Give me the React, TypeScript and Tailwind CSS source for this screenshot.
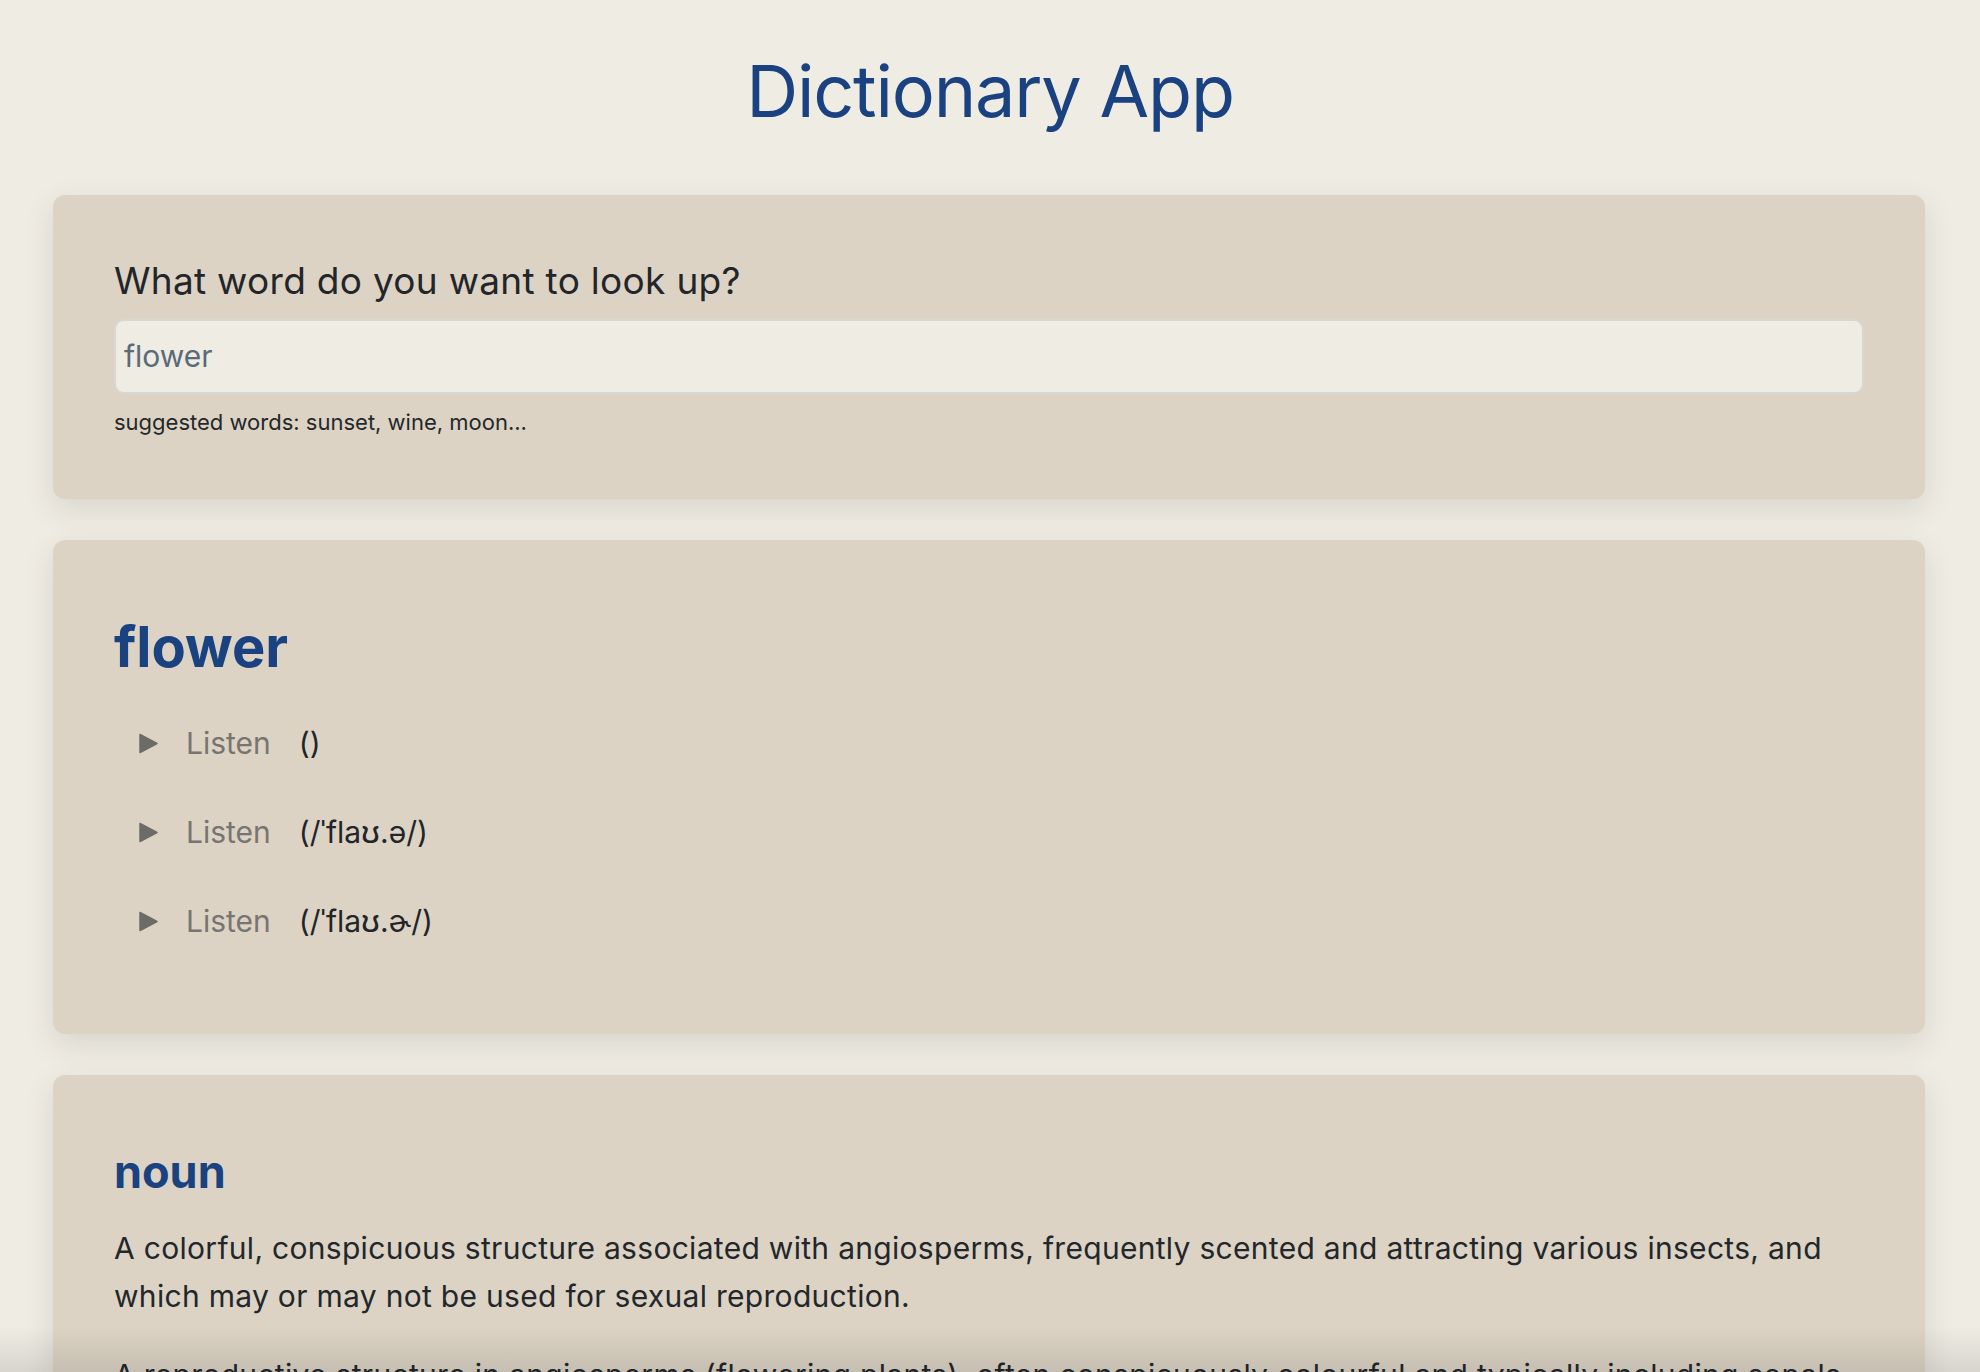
import React from 'react';

const pronunciations = ['()', '(/ˈflaʊ.ə/)', '(/ˈflaʊ.ɚ/)'];

const definitions = [
  'A colorful, conspicuous structure associated with angiosperms, frequently scented and attracting various insects, and which may or may not be used for sexual reproduction.',
  'A reproductive structure in angiosperms (flowering plants), often conspicuously colourful and typically including sepals, petals, and either or both stamens and/or a pistil.',
  'A plant that bears flowers, especially a small plant grown chiefly for its blossoms.',
];

const PlayTriangle: React.FC = () => (
  <svg width="21" height="21" viewBox="0 0 21 21" className="shrink-0">
    <path d="M2 1.5 L19 10.5 L2 19.5 Z" fill="#6d6b68" stroke="#6d6b68" strokeWidth="1.5" strokeLinejoin="round" />
  </svg>
);

export default function App() {
  return (
    <div className="relative h-screen overflow-hidden bg-[#efece4] font-['Inter',sans-serif] text-[#232629]">
      <h1 className="pt-[47px] pb-[60px] text-center text-[72px] leading-[88px] font-normal tracking-[-1.2px] text-[#1a4280]">
        Dictionary App
      </h1>

      <div className="flex flex-col gap-[41px] pl-[53px] pr-[55px]">
        {/* search */}
        <section className="rounded-[12px] bg-[#dcd3c4] px-[61px] pt-[64px] pb-[60px] shadow-[0_10px_30px_rgba(60,50,30,0.12)]">
          <label className="block text-[37px] leading-[44px] tracking-[0.3px] text-[#222529]">
            What word do you want to look up?
          </label>
          <div className="mt-[16px] flex h-[75px] items-center rounded-[10px] border-2 border-[#d9d7d2] bg-[#efece4] px-[8px]">
            <input
              type="text"
              defaultValue="flower"
              className="w-full bg-transparent text-[30px] text-[#5b6a77] outline-none"
            />
          </div>
          <p className="mt-[12px] text-[22px] leading-[33px] text-[#25282b]">
            suggested words: sunset, wine, moon...
          </p>
        </section>

        {/* word + phonetics */}
        <section className="rounded-[12px] bg-[#dcd3c4] px-[61px] pt-[73px] pb-[89px] shadow-[0_10px_30px_rgba(60,50,30,0.12)]">
          <h2 className="text-[56px] leading-[68px] font-bold text-[#1a4280]">flower</h2>
          <ul className="mt-[38px] flex flex-col gap-[41px] pl-[24px]">
            {pronunciations.map((p, i) => (
              <li key={i} className="flex h-[48px] items-center text-[30px] leading-[48px]">
                <PlayTriangle />
                <span className="ml-[27px] text-[#787571]">Listen</span>
                <span className="ml-[28px] text-[#222529]">{p}</span>
              </li>
            ))}
          </ul>
        </section>

        {/* meanings */}
        <section className="rounded-[12px] bg-[#dcd3c4] px-[61px] pt-[69px] pb-[60px] shadow-[0_10px_30px_rgba(60,50,30,0.12)]">
          <h3 className="text-[45px] leading-[56px] font-bold text-[#1a4280]">noun</h3>
          <div className="mt-[24px] flex flex-col gap-[31px]">
            {definitions.map((d, i) => (
              <p key={i} className="text-[30px] leading-[48px] tracking-[0.3px] text-[#23272b]">
                {d}
              </p>
            ))}
          </div>
        </section>
      </div>

      <div className="pointer-events-none absolute inset-x-0 bottom-0 h-[46px] bg-linear-to-t from-black/10 to-transparent" />
    </div>
  );
}
